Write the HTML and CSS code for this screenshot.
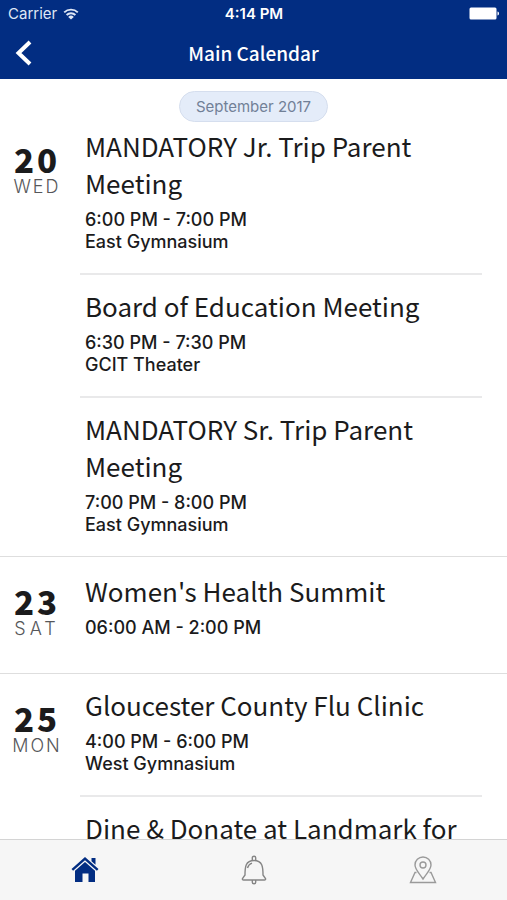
FILE: index.html
```html
<!DOCTYPE html>
<html lang="en">
<head>
<meta charset="utf-8">
<meta name="viewport" content="width=device-width, initial-scale=1">
<title>Main Calendar</title>
<link rel="stylesheet" href="styles.css">
</head>
<body>
<div class="app">
  <header class="header">
    <div class="status">
      <span class="carrier">Carrier
        <svg class="wifi" viewBox="0 0 16 12" aria-hidden="true"><path d="M1.2 4.4a9.8 9.8 0 0 1 13.6 0M3.6 7a6.3 6.3 0 0 1 8.8 0" fill="none" stroke="currentColor" stroke-width="1.9"/><path d="M8 11.6 5.2 8.9a4 4 0 0 1 5.6 0z" fill="currentColor"/></svg>
      </span>
      <span class="clock">4:14 PM</span>
      <svg class="battery" viewBox="0 0 31 13" aria-hidden="true"><rect x="0.5" y="0.5" width="27" height="12" rx="1.5" fill="currentColor"/><path d="M28.5 4.5c2 .4 2 3.600 0 4z" fill="currentColor"/></svg>
    </div>
    <div class="navbar">
      <button class="back" type="button" aria-label="Back"><svg viewBox="0 0 18 26" aria-hidden="true"><path d="M15 2 3.500 13 15 24" fill="none" stroke="currentColor" stroke-width="4"/></svg></button>
      <h1>Main Calendar</h1>
    </div>
  </header>

  <main class="calendar">
    <div class="month"><span>September 2017</span></div>
    <section class="day">
      <div class="date"><b>20</b><span>WED</span></div>
      <div class="events">
        <article><h2>MANDATORY Jr. Trip Parent Meeting</h2><p class="time">6:00 PM - 7:00 PM</p><p>East Gymnasium</p></article>
        <article><h2>Board of Education Meeting</h2><p class="time">6:30 PM - 7:30 PM</p><p>GCIT Theater</p></article>
        <article><h2>MANDATORY Sr. Trip Parent Meeting</h2><p class="time">7:00 PM - 8:00 PM</p><p>East Gymnasium</p></article>
      </div>
    </section>
    <section class="day short">
      <div class="date"><b>23</b><span class="wide">SAT</span></div>
      <div class="events">
        <article><h2>Women's Health Summit</h2><p class="time">06:00 AM - 2:00 PM</p></article>
      </div>
    </section>
    <section class="day">
      <div class="date"><b>25</b><span>MON</span></div>
      <div class="events">
        <article><h2>Gloucester County Flu Clinic</h2><p class="time">4:00 PM - 6:00 PM</p><p>West Gymnasium</p></article>
        <article><h2>Dine &amp; Donate at Landmark for</h2></article>
      </div>
    </section>
  </main>

  <nav class="tabs">
    <a class="active" href="#home" aria-label="Home"><svg viewBox="0 0 30 30" aria-hidden="true"><path d="M15 2 28.500 14l-1.600 1.700L15 5.200 3.100 15.700 1.500 14zM21.500 3h4v6.800l-4-3.500z"/><path d="M15 7 25 15.800V27h-6.500v-8.500h-6V27H5V15.800z"/></svg></a>
    <a href="#alerts" aria-label="Notifications"><svg viewBox="0 0 30 30" aria-hidden="true"><path class="line" d="M6 20c0-8 .5-14.500 9-14.500S24 12 24 20l2.500 3.500c.4 1-.2 1.500-1 1.500h-21c-.8 0-1.400-.5-1-1.500zM13.300 5.500V2.800c0-2 3.400-2 3.400 0v2.700M13.300 25v2.200c0 2 3.400 2 3.400 0V25M8.500 13c.7-2.500 2-4 4.500-4.800"/></svg></a>
    <a class="place" href="#map" aria-label="Map"><svg viewBox="0 0 30 30" aria-hidden="true"><path class="line" d="M15 24C11.500 18.500 7 14.500 7 10a8 8 0 0 1 16 0c0 4.500-4.500 8.500-8 14zM8.500 17.500H7L2.500 27.500h25L23 17.500h-1.500"/><circle class="line" cx="15" cy="10" r="3"/></svg></a>
  </nav>
</div>
</body>
</html>
```

FILE: styles.css
```css
* { box-sizing: border-box; }

body {
  margin: 0;
  background: #fff;
  color: #1b1b1c;
  font-family: Inter, "Liberation Sans", sans-serif;
}

h1, h2, p { margin: 0; }

.app {
  height: 100vh;
  display: flex;
  flex-direction: column;
}

.header {
  flex: none;
  background: #022d82;
  color: #fff;
}

.status, .navbar {
  display: grid;
  grid-template-columns: 1fr auto 1fr;
  align-items: center;
}

.status {
  height: 27px;
  padding: 0 7px 0 8px;
  font-size: 15px;
}

.carrier {
  display: flex;
  align-items: center;
  gap: 6px;
  color: #dfe7f5;
}

.wifi { width: 16px; height: 12px; }
.clock { font-weight: 600; }
.battery { width: 31px; height: 13px; justify-self: end; }

.navbar { height: 52px; padding: 0 15px; }

.back {
  width: 20px;
  padding: 0;
  border: 0;
  background: none;
  color: inherit;
}

.back svg { display: block; width: 18px; height: 26px; }

h1 {
  font: 500 19px/28px "Noto Sans CJK SC", "Noto Sans", sans-serif;
}

.calendar {
  flex: 1;
  min-height: 0;
  overflow: hidden;
  padding-top: 12px;
}

.month { display: flex; justify-content: center; }

.month span {
  padding: 0 16px;
  border: 1px solid #d5deee;
  border-radius: 16px;
  background: #e4ecf9;
  color: #718097;
  font-size: 15px;
  line-height: 29px;
}

.day {
  display: grid;
  grid-template-columns: 80px 1fr;
  padding-right: 25px;
  border-bottom: 1px solid #dedede;
}

.month + .day { margin-top: -7px; }
.day:not(:last-child) article:last-child { border-bottom: 0; }

.date {
  display: flex;
  flex-direction: column;
  align-items: center;
  padding: 25px 6px 0 0;
}

.date b {
  font: 900 33px/38px "Noto Sans CJK SC", "Noto Sans", sans-serif;
  letter-spacing: 3px;
}

.date span {
  color: #56575a;
  font-size: 18px;
  font-weight: 300;
  line-height: 18px;
  letter-spacing: 2px;
}

.date .wide { letter-spacing: 4px; }

article {
  padding: 12px 0 20px 5px;
  border-bottom: 2px solid #e9e9ea;
}

.short article { padding: 15px 0 34px 5px; }

h2 {
  margin-bottom: 8px;
  font: 400 26px/37px "Noto Sans CJK SC", "Noto Sans", sans-serif;
}

p {
  font-size: 18px;
  font-weight: 500;
  line-height: 22px;
}

.tabs {
  flex: none;
  height: 61px;
  display: grid;
  grid-template-columns: repeat(3, 1fr);
  border-top: 1px solid #d4d4d4;
  background: #f6f6f6;
}

.tabs a {
  display: grid;
  place-items: center;
  color: #858585;
}

.tabs .active { color: #022d82; }
.tabs .place { color: #9a9a9a; }
.tabs svg { width: 30px; height: 30px; fill: currentColor; }
.tabs .line { fill: none; stroke: currentColor; stroke-width: 1.4; }
```
